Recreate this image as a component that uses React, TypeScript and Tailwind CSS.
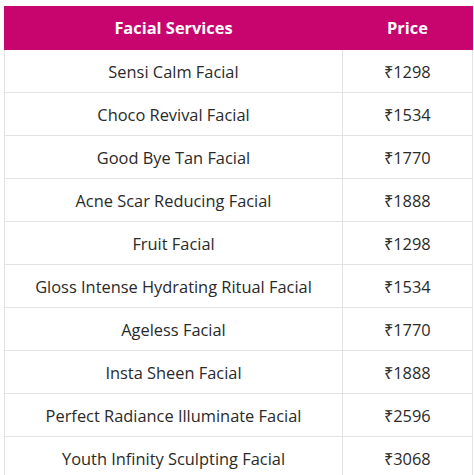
const rows: [string, string][] = [
  ["Sensi Calm Facial", "₹1298"],
  ["Choco Revival Facial", "₹1534"],
  ["Good Bye Tan Facial", "₹1770"],
  ["Acne Scar Reducing Facial", "₹1888"],
  ["Fruit Facial", "₹1298"],
  ["Gloss Intense Hydrating Ritual Facial", "₹1534"],
  ["Ageless Facial", "₹1770"],
  ["Insta Sheen Facial", "₹1888"],
  ["Perfect Radiance Illuminate Facial", "₹2596"],
  ["Youth Infinity Sculpting Facial", "₹3068"],
];

export default function App() {
  return (
    <div className="w-[474px] h-[475px] overflow-hidden bg-white pt-[6px] pl-[4px] font-['Open_Sans',sans-serif]">
      <table className="w-[469px] border-collapse text-[16.4px] text-[#2a2a2a]">
        <thead>
          <tr className="bg-[#c8056f] text-white h-[43px]">
            <th className="w-[338px] font-bold text-center border border-[#c8056f]">Facial Services</th>
            <th className="font-bold text-center border border-[#c8056f]">Price</th>
          </tr>
        </thead>
        <tbody>
          {rows.map(([name, price]) => (
            <tr key={name} className="h-[43px]">
              <td className="text-center pt-[2px] border border-[#e3e3e3]">{name}</td>
              <td className="text-center pt-[2px] border border-[#e3e3e3]">{price}</td>
            </tr>
          ))}
        </tbody>
      </table>
    </div>
  );
}
